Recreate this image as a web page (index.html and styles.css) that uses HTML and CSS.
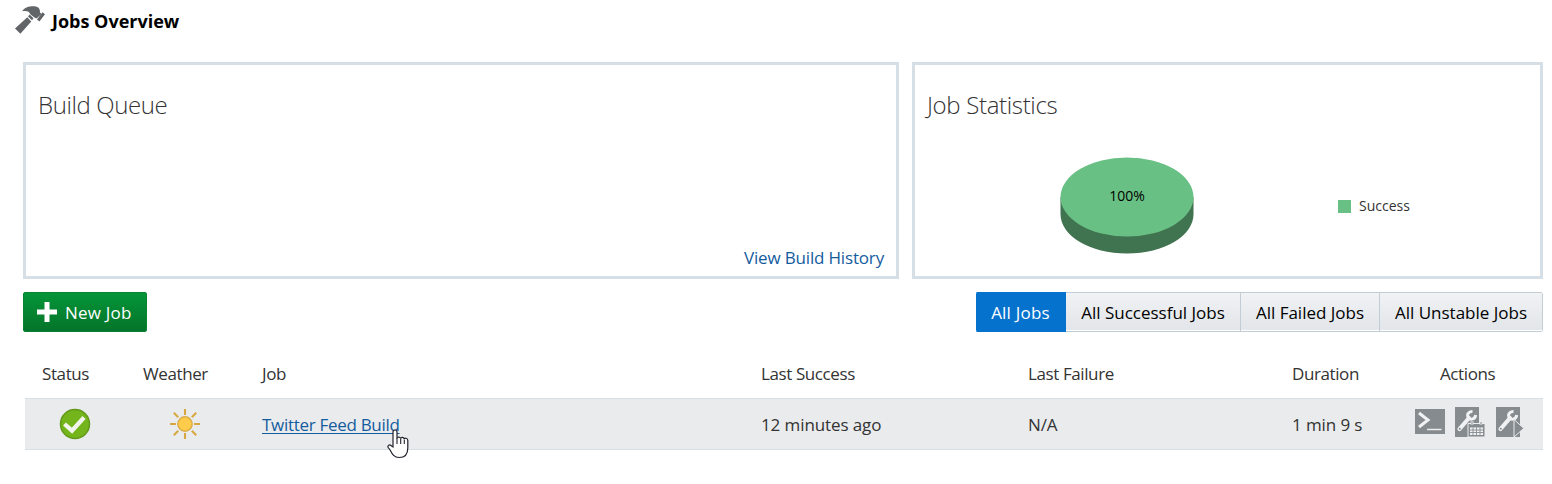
FILE: index.html
```html
<!DOCTYPE html>
<html lang="en">
<head>
<meta charset="utf-8">
<title>Jobs Overview</title>
<link rel="stylesheet" href="styles.css">
</head>
<body>
<header class="page-header">
  <svg class="hammer" width="30" height="29" viewBox="0 0 30 29" fill="#626568">
    <path d="M7 5.200C10 1 15 0 19.500.3c3.500.3 5.300 2 5.500 4.900l-.5 3.300-4 3.700-5-3.700c-.7-2.700-3-4.300-8.500-3.300z"/>
    <path d="M12.300 11.200l4 4.200L5.400 27.800 0 22.500z"/>
    <path d="M14.500 8.500l4 3.800-1.500 1.900-4-3.800zM22 13.500l5.500-7.300 2.500 2-5.600 7.400z"/>
    <path d="M20.500 11.500l5-4.500" stroke="#626568" stroke-width="3"/>
  </svg>
  <h1 class="page-title"><span>Jobs Overview</span></h1>
</header>
<main class="content">
  <section class="panels">
    <div class="panel">
      <h2 class="panel-title">Build Queue</h2>
      <a class="history">View Build History</a>
    </div>
    <div class="panel">
      <h2 class="panel-title stats-title">Job Statistics</h2>
      <div class="chart">
        <svg class="pie" width="134" height="98" viewBox="0 0 134 98">
          <path d="M.5 40v17C.5 79 30 96.500 67 96.500s66.500-17.500 66.500-39.500V40z" fill="#40734f"/>
          <ellipse cx="67" cy="40" rx="66.500" ry="39.500" fill="#69c084"/>
        </svg>
        <span class="pie-label">100%</span>
        <div class="legend"><i class="swatch"></i><span class="legend-label">Success</span></div>
      </div>
    </div>
  </section>
  <section class="toolbar">
    <button class="new-job">
      <svg width="20" height="20" viewBox="0 0 20 20"><path d="M7.500 0h5v7.500H20v5h-7.500V20h-5v-7.500H0v-5h7.500z" fill="#fff"/></svg>
      <span>New Job</span>
    </button>
    <div class="tabs">
      <button class="tab active"><span>All Jobs</span></button>
      <button class="tab"><span>All Successful Jobs</span></button>
      <button class="tab"><span>All Failed Jobs</span></button>
      <button class="tab"><span>All Unstable Jobs</span></button>
    </div>
  </section>
  <section class="table">
    <div class="row head">
      <span>Status</span><span>Weather</span><span>Job</span><span>Last Success</span><span>Last Failure</span><span>Duration</span><span>Actions</span>
    </div>
    <div class="row item">
      <svg class="status" width="32" height="32" viewBox="0 0 32 32">
        <circle cx="16" cy="16" r="14.500" fill="#74b51b" stroke="#62991c" stroke-width="1.500"/>
        <path d="M5.500 16l7.500 6.700L25 9.500" fill="none" stroke="#f2f5ee" stroke-width="4.300"/>
      </svg>
      <svg class="weather" width="32" height="32" viewBox="0 0 32 32">
        <path d="M16 1v6M16 25v6M1 16h6M25 16h6M4.800 4.800l4.400 4.400M22.800 22.800l4.400 4.400M4.800 27.200l4.400-4.400M22.800 9.200l4.400-4.400" stroke="#d7a842" stroke-width="2.100" fill="none"/>
        <circle cx="16" cy="16" r="7.200" fill="#ffcb4b" stroke="#d9ac48" stroke-width="1.400"/>
      </svg>
      <a class="job-link">Twitter Feed Build</a>
      <span class="data">12 minutes ago</span><span class="data">N/A</span><span class="data">1 min 9 s</span>
      <div class="actions">
        <svg width="30" height="30" viewBox="0 0 30 30">
          <path d="M0 2h30v25H0z" fill="#868b8f"/>
          <path d="M4 6l9 7-9 7" fill="none" stroke="#f1f2f3" stroke-width="3"/>
          <path d="M12 22.500h14.500" stroke="#eceded" stroke-width="1.500"/>
        </svg>
        <svg width="30" height="30" viewBox="0 0 30 30">
          <path d="M0 0h24v30H0z" fill="#868b8f"/>
          <path d="M4.500 22L14 11" stroke="#f0f1f2" stroke-width="4.200" stroke-linecap="round"/>
          <path d="M17.500 4.500c-4-.2-6 3-4.200 6.200 2.500 2.800 7 1.300 7.400-2.700" fill="none" stroke="#f0f1f2" stroke-width="3"/>
          <circle cx="4.800" cy="21.700" r="1" fill="#868b8f"/>
          <path d="M13 16.500h17V30H13z" fill="#868b8f" stroke="#eaebed" stroke-width="1"/>
          <path d="M15 20.500h13V28H15z" fill="#f0f1f2"/>
          <path d="M15 23h13M15 25.500h13M18 20.500V28M21.500 20.500V28M25 20.500V28" stroke="#868b8f" stroke-width=".9"/>
          <path d="M17 14.500v3M26 14.500v3" stroke="#f0f1f2" stroke-width="3"/><path d="M17 15v2M26 15v2" stroke="#868b8f" stroke-width="1"/>
        </svg>
        <svg width="30" height="30" viewBox="0 0 30 30">
          <path d="M1 0h24v30H1z" fill="#868b8f"/>
          <path d="M5.500 22L15 11" stroke="#f0f1f2" stroke-width="4.200" stroke-linecap="round"/>
          <path d="M18.500 4.500c-4-.2-6 3-4.200 6.200 2.500 2.800 7 1.300 7.400-2.700" fill="none" stroke="#f0f1f2" stroke-width="3"/>
          <circle cx="5.800" cy="21.700" r="1" fill="#868b8f"/>
          <path d="M19 12.500v17.500l9.800-8.700z" fill="#868b8f" stroke="#eaebed" stroke-width="1"/>
        </svg>
      </div>
    </div>
  </section>
</main>
<svg class="cursor" width="22" height="30" viewBox="0 0 22 30">
  <path d="M6 18V3c0-2.700 4-2.700 4 0v6.500c0-2 3.700-2 3.700.3 0-2 3.600-1.800 3.600.6 0-1.800 3.500-1.600 3.500 1v7.500c0 6-3 9.600-8.700 9.600-5 0-6.700-3-9-7.500L1.200 18.500c-1-2.300 1.600-3.300 3-1.700z" fill="#fff" stroke="#20202c" stroke-width="1.200"/>
  <path d="M10 9v6M13.700 10v5M17.300 11v4" stroke="#20202c" stroke-width="1.100"/>
</svg>
</body>
</html>
```
FILE: styles.css
```css
* { box-sizing: border-box; }
body { margin: 0; height: 484px; overflow: hidden; background: #fff; color: #333; font: 17px/24px "Open Sans", "Noto Sans", sans-serif; letter-spacing: -0.4px; position: relative; }
h1, h2 { margin: 0; }
span, a { white-space: nowrap; }
.page-header { height: 62px; padding: 6px 0 0 15px; display: flex; align-items: flex-start; gap: 7px; }
.page-title { font-size: 18px; line-height: 31px; font-weight: 700; color: #000; letter-spacing: 0; }
.content { padding: 0 9px 0 23px; }
.panels { display: grid; grid-template-columns: 876px 631px; gap: 13px; height: 217px; }
.panel { border: 3px solid #d6dfe6; padding: 24px 12px 0; display: flex; flex-direction: column; }
.panel-title { font-weight: 300; font-size: 24px; line-height: 32px; color: #333; letter-spacing: -0.4px; }
.stats-title { letter-spacing: -0.33px; }
.history { margin-top: auto; align-self: flex-end; margin-bottom: 6px; color: #145c9e; letter-spacing: -0.17px; }
.chart { display: flex; align-items: flex-start; margin: 36px 0 0 133px; position: relative; }
.pie-label { position: absolute; left: 0; width: 134px; top: 29px; text-align: center; font-size: 14px; line-height: 20px; color: #000; letter-spacing: 0; }
.legend { display: flex; align-items: center; gap: 8px; margin: 39px 0 0 144px; font-size: 14px; line-height: 20px; letter-spacing: 0; }
.swatch { width: 13px; height: 13px; background: #69c084; }
.toolbar { display: flex; justify-content: space-between; margin-top: 13px; height: 40px; }
button { font: inherit; letter-spacing: 0; margin: 0; padding: 0; border: 0; }
.new-job { width: 124px; height: 40px; display: flex; align-items: center; gap: 8px; padding-left: 13px; color: #fff; border: 1px solid #078331; border-radius: 2px; background: linear-gradient(#049538, #04742a); letter-spacing: 0.2px; }
.new-job span, .tab span { padding-top: 1px; }
.tabs { display: grid; grid-template-columns: 90px 175px 139px 163px; border-radius: 2px; overflow: hidden; }
.tab { color: #000; background: linear-gradient(#f0f2f4, #e2e5e9); border: solid #c2cdd6; border-width: 1px 1px 1px 0; box-shadow: inset 0 -1px #fff; display: flex; align-items: center; justify-content: center; }
.tab:last-child { border-radius: 0 2px 2px 0; }
.tab.active { background: #0572ce; border-color: #0572ce; box-shadow: none; color: #fff; letter-spacing: 0.2px; }
.table { margin: 17px 0 0 2px; }
.row { display: grid; grid-template-columns: 101px 119px 499px 267px 264px 148px 1fr; padding-left: 17px; align-items: center; }
.head { height: 49px; }
.item { height: 52px; background: #eaebed; border: solid #d6dfe6; border-width: 1px 0; }
.status { margin-left: 17px; }
.weather { margin-left: 26px; }
.data { letter-spacing: -0.1px; padding-top: 2px; }
.job-link { padding-top: 2px; color: #145c9e; letter-spacing: -0.3px; text-decoration: underline; text-decoration-thickness: 1px; text-underline-offset: 2px; }
.actions { display: flex; gap: 10px; margin: -4px 0 0 -25px; }
.cursor { position: absolute; left: 387px; top: 429px; }
```
